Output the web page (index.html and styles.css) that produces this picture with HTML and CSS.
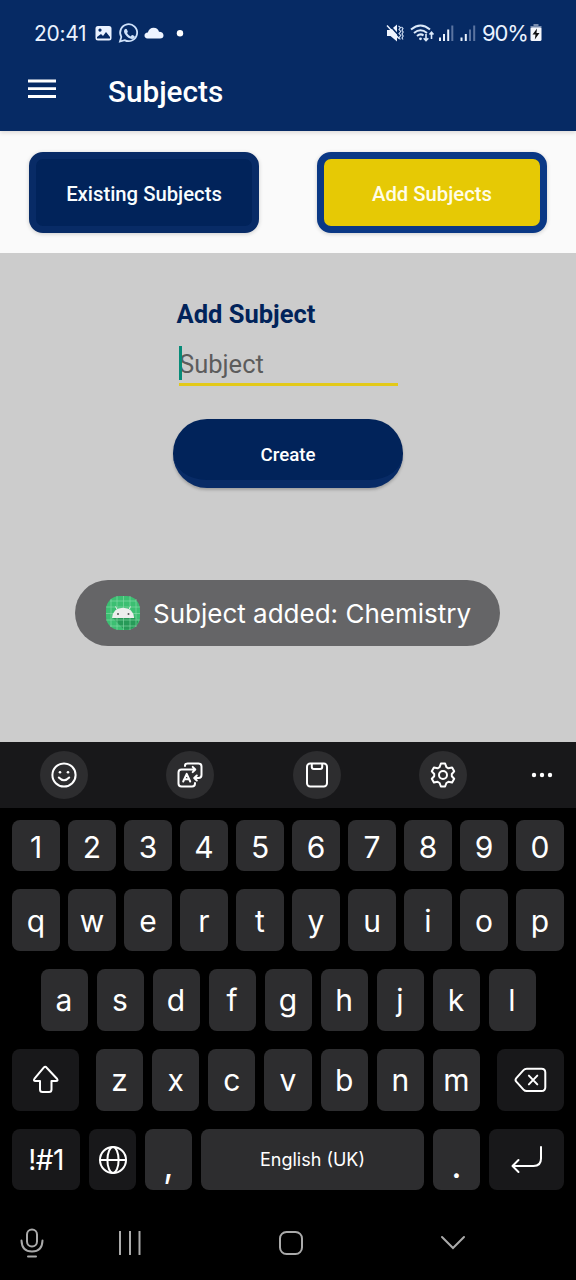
FILE: index.html
```html
<!DOCTYPE html>
<html lang="en">
<head>
<meta charset="utf-8">
<title>Subjects</title>
<link rel="stylesheet" href="styles.css">
</head>
<body>
<div class="screen">
  <header class="header">
    <div class="status">
      <div class="status-left">
        <span class="clock">20:41</span>
        <svg class="status-icons" width="90" height="24" viewBox="0 0 90 24">
          <path transform="translate(0 1.500)" fill="#eaf2ff" fill-rule="evenodd" d="M4 3.500h11q2.500 0 2.500 2.500v9.500q0 2.500-2.500 2.500h-11q-2.500 0-2.500-2.500v-9.500q0-2.500 2.500-2.500zM3 14.500v1.500h13v-1.500l-4-5-3 4-2-2zM6 6a1.600 1.600 0 1 0 .01 0z"/>
          <g transform="translate(.5 1)">
          <path fill="none" stroke="#cfe2fa" stroke-width="1.800" d="M25.500 19.500l1.300-4.600a8.500 8.500 0 1 1 3.300 3.200z"/>
          <path fill="#cfe2fa" d="M30.300 7.200q1.200-1 2 0l1 2.200q.2.600-.8 1.700 1.300 2.500 3.700 3.300l1.200-1.300q.4-.4 2.800 1.100.5 2.400-2.800 2.800-3.600-.3-6.800-4.700-2-3-.3-5.100z"/>
          </g>
          <path fill="#eef4ff" d="M53.500 17.500q-3-.3-3-3t3.300-3q1.400-4.800 5.800-4.800 4.200 0 5.400 4 4.500 0 4.500 3.800 0 3-3.500 3z"/>
          <circle cx="86" cy="12.300" r="3.200" fill="#fff"/>
        </svg>
      </div>
      <div class="status-right">
        <svg width="94" height="24" viewBox="0 0 94 24">
          <g fill="#f0f5ff">
            <path d="M2 9h3.500l6.500-5.500v17l-6.500-5.500h-3.500z"/>
            <path d="M13.500 5l2 1.500-1.500 2 1.800 2-1.800 2 1.800 2-1.800 2 1.300 2M16.500 6l1.500 1.500-1 1.700 1.200 1.800-1.200 2 1.200 2-1.200 2 1 1.500" fill="none" stroke="#d5e4f8" stroke-width="1.100"/>
          </g>
          <path d="M3.500 3l9 10" stroke="#062a64" stroke-width="1.600"/>
          <path d="M2 4.500l12 13" stroke="#f0f5ff" stroke-width="1.400"/>
          <g fill="none" stroke="#dceafa" stroke-width="2">
            <path d="M26 8.500q9.500-8 19 0M29 12q6.500-5.500 13 0M32 15q3.500-3 6.500-.5"/>
            <path stroke-width="1.600" d="M41 13v6.500m-2.300-2.200 2.300 2.400 2.300-2.400M46.500 18v-6.500m-2 2 2-2.200 2 2.200"/>
          </g>
          <circle cx="35.500" cy="17.800" r="1.400" fill="#dceafa"/>
          <g fill="#eaf2fc" transform="translate(-.500 -.500)">
            <rect x="54.500" y="17" width="2" height="3.500"/><rect x="58.500" y="13.500" width="2" height="7"/><rect x="62.700" y="9" width="2" height="11.500"/><rect x="66.800" y="5" width="2" height="15.500" fill="#5b74a0"/>
            <rect x="76" y="17" width="2" height="3.500"/><rect x="80.300" y="13.500" width="2" height="7"/><rect x="84.500" y="9" width="2" height="11.500" fill="#5b74a0"/><rect x="88.700" y="5" width="2" height="15.500" fill="#5b74a0"/>
          </g>
        </svg>
        <span class="percent">90%</span>
        <svg width="12" height="18" viewBox="0 0 12 18">
          <path fill="#788cae" d="M3.500 0h5v2h3v3h-11v-3h3z"/>
          <rect x=".500" y="3.500" width="11" height="13.500" rx="1.500" fill="#f5f7fb"/>
          <path fill="#111" d="M7 4.500l-4.500 6h3l-.7 5 4.700-6.500h-3z"/>
        </svg>
      </div>
    </div>
    <div class="titlebar">
      <svg class="menu" width="28" height="20" viewBox="0 0 28 20"><path stroke="#fff" stroke-width="2.800" d="M0 2h28M0 9.700h28M0 17.500h28"/></svg>
      <h1 class="title">Subjects</h1>
    </div>
  </header>

  <nav class="tabs">
    <button class="tab">Existing Subjects</button>
    <button class="tab tab-active">Add Subjects</button>
  </nav>

  <main class="content">
    <h2 class="form-title">Add Subject</h2>
    <div class="field"><span class="placeholder">Subject</span><i class="caret"></i></div>
    <button class="create">Create</button>
    <div class="toast">
      <svg width="36" height="36" viewBox="0 0 36 36">
        <rect x="1" y="1" width="34" height="34" rx="13.500" fill="#3cbf72"/>
        <path fill="#279a58" d="M7 22l12 12.800h3q9-1 11-7.800v-1l-5-5z"/>
        <path stroke="#8bdcab" stroke-width=".600" d="M6 4v28M12 1v34M18.500 1v34M25 1v34M31 4v28M5 6h26M1 12h34M1 18.500h34M1 25h34M5 31h26"/>
        <path fill="#eceeed" d="M7 23q.7-9.800 11-10.300 10.300.5 11.200 10.300z"/>
        <path stroke="#eceeed" d="M12.500 15l-2-3.500M23.500 15l2-3.500"/>
        <circle cx="13" cy="19" r="1" fill="#555"/><circle cx="23.500" cy="19" r="1" fill="#555"/>
      </svg>
      <span class="toast-text">Subject added: Chemistry</span>
    </div>
  </main>

  <section class="keyboard">
    <div class="tools">
      <span class="tool"><svg width="30" height="30" viewBox="0 0 30 30"><circle cx="15" cy="15" r="11.600"/><path d="M9.800 17.500q5.200 5.500 10.400 0"/><g class="solid"><circle cx="11" cy="12.200" r="1.300"/><circle cx="19" cy="12.200" r="1.300"/></g></svg></span>
      <span class="tool"><svg width="30" height="30" viewBox="0 0 30 30"><path d="M10 6v-.200q0-2.300 2.500-2.300h11q3 0 3 3v8.500q0 3-3 3h-4M21.800 15.500l-2.600 2.500 2.600 2.500M10 9.500h10m-2.300-2.600l2.600 2.600-2.600 2.600M14 9.500h-7.500q-3 0-3 3v11q0 3 3 3h10.500q3 0 3-3v-.500"/><path d="M8.200 21.500l3.500-7.700 3.500 7.700M9.500 19.200h4.400"/></svg></span>
      <span class="tool"><svg width="30" height="30" viewBox="0 0 30 30"><rect x="5" y="3.500" width="20" height="23" rx="3.200"/><path d="M9.800 4v3q0 2 2 2h6.400q2 0 2-2v-3"/></svg></span>
      <span class="tool"><svg width="30" height="30" viewBox="0 0 30 30"><circle cx="15" cy="15" r="4"/><path d="M12.900 3.500h4.200l1.300 3.700 2 1.100 3.700-.7 2.100 3.700-2.400 2.700v2.200l2.400 2.600-2.100 3.700-3.700-.7-2 1.200-1.300 3.500h-4.200l-1.300-3.500-2-1.200-3.700.7-2.100-3.700 2.400-2.600v-2.200l-2.400-2.700 2.100-3.700 3.700.7 2-1.100z"/></svg></span>
      <svg class="more" width="24" height="8" viewBox="0 0 24 8"><circle cx="4" cy="4" r="2.200"/><circle cx="12" cy="4" r="2.200"/><circle cx="20" cy="4" r="2.200"/></svg>
    </div>
    <div class="row digits"><span class="key">1</span><span class="key">2</span><span class="key">3</span><span class="key">4</span><span class="key">5</span><span class="key">6</span><span class="key">7</span><span class="key">8</span><span class="key">9</span><span class="key">0</span></div>
    <div class="row top"><span class="key">q</span><span class="key">w</span><span class="key">e</span><span class="key">r</span><span class="key">t</span><span class="key">y</span><span class="key">u</span><span class="key">i</span><span class="key">o</span><span class="key">p</span></div>
    <div class="row home"><span class="key">a</span><span class="key">s</span><span class="key">d</span><span class="key">f</span><span class="key">g</span><span class="key">h</span><span class="key">j</span><span class="key">k</span><span class="key">l</span></div>
    <div class="row lower">
      <span class="key dark"><svg width="30" height="30" viewBox="0 0 30 30"><path d="M13.200 2.700q1.500-1.700 3 0l10.300 11q1.500 2.300-1 2.300h-4.500v8.500q0 2.500-2.500 2.500h-6.500q-2.500 0-2.500-2.500v-8.500h-4.500q-2.500 0-1-2.300z" transform="translate(-.500 0)"/></svg></span>
      <span class="letters"><span class="key">z</span><span class="key">x</span><span class="key">c</span><span class="key">v</span><span class="key">b</span><span class="key">n</span><span class="key">m</span></span>
      <span class="key dark"><svg width="34" height="30" viewBox="0 0 34 30"><g transform="translate(-.700 0)"><path d="M13.500 3.700h14.700q3.800 0 3.800 3.800v14.800q0 3.800-3.800 3.800h-14.700q-2 0-3.300-1.500l-7.200-7.900q-1.500-1.800 0-3.600l7.200-7.900q1.300-1.500 3.300-1.500z"/><path d="M15.600 10.600l8.400 8.800M24 10.600l-8.400 8.800"/></g></svg></span>
    </div>
    <div class="row bottom">
      <span class="key dark symbols">!#1</span>
      <span class="key dark"><svg width="30" height="30" viewBox="0 0 30 30"><circle cx="15" cy="15" r="13"/><ellipse cx="15" cy="15" rx="5.600" ry="13"/><path d="M2 15h26"/></svg></span>
      <span class="key mark">,</span>
      <span class="key space">English (UK)</span>
      <span class="key mark dot">.</span>
      <span class="key dark"><svg width="34" height="30" viewBox="0 0 34 30"><path d="M31 2v11.500q0 7.500-7.500 7.500h-20.500M8.500 15l-6 6 6 6"/></svg></span>
    </div>
    <div class="navbar">
      <svg width="24" height="32" viewBox="0 0 24 32"><rect x="7" y="2.500" width="10" height="17" rx="5"/><path d="M1.500 13.500q.3 11 10.500 11t10.500-11M8 29.500h8"/></svg>
      <svg width="24" height="24" viewBox="0 0 24 24"><path d="M2 .500v23M12 .500v23M21.500 .500v23"/></svg>
      <svg width="26" height="26" viewBox="0 0 26 26"><rect x="2" y="2" width="22" height="22" rx="6.500"/></svg>
      <svg width="26" height="16" viewBox="0 0 26 16"><path d="M2 2l11 11 11-11"/></svg>
    </div>
  </section>
</div>
</body>
</html>
```
FILE: styles.css
```css
* { box-sizing: border-box; }
body { margin: 0; background: #000; font-family: Roboto, "Liberation Sans", sans-serif; }
button { font-family: inherit; padding: 0; }
svg { display: block; flex: none; }
.screen { width: 576px; height: 1280px; display: flex; flex-direction: column; overflow: hidden; }

.header { height: 131px; background: #062a64; color: #fff; flex: none; position: relative; z-index: 1; box-shadow: 0 2px 4px rgba(90, 70, 60, .16); }
.status { height: 48px; padding: 20px 34px 0 34px; display: flex; justify-content: space-between; align-items: flex-start; font-family: Inter, sans-serif; color: #eaf3ff; }
.status-left, .status-right { display: flex; align-items: center; height: 26px; }
.clock { width: 60px; font-size: 21px; letter-spacing: -.3px; }
.percent { width: 45px; margin-left: 3px; margin-right: 3px; font-size: 22px; letter-spacing: -1.1px; }
.titlebar { height: 83px; display: flex; align-items: center; padding: 0 28px 0; gap: 52px; }
.menu { margin-bottom: 2px; }
.title { margin: 3px 0 0; font-size: 29.700px; font-weight: 500; }

.tabs { height: 122px; flex: none; background: #fafafa; padding: 21px 29px 0; display: flex; justify-content: space-between; }
.tab { width: 230px; height: 81px; border: 7px solid #082b66; border-radius: 14px; background: #01235a; color: #f8fdff; font-size: 20.300px; font-weight: 500; padding-top: 2px; box-shadow: 0 1px 4px rgba(0, 0, 0, .18); }
.tab-active { border-color: #0a3885; background: #e6c905; color: #fffde8; }

.content { height: 489px; flex: none; background: #ccc; padding-top: 45px; display: flex; flex-direction: column; align-items: center; }
.form-title { width: 223px; height: 33px; margin: 0; line-height: 33px; font-size: 25.500px; font-weight: 700; color: #01235a; }
.field { position: relative; width: 219px; height: 55px; margin-left: 1px; border-bottom: 3px solid #e3c918; padding-top: 15px; font-size: 25.500px; line-height: 36px; color: #5c5c5c; }
.caret { position: absolute; left: 0; top: 15px; width: 3px; height: 34px; background: #078b78; }
.create { width: 230px; height: 69px; margin-top: 33px; border: 0 solid #082b66; border-bottom-width: 8px; border-radius: 34px; background: #01235a; color: #fff; font-size: 18.700px; font-weight: 500; padding-top: 10px; box-shadow: 0 2px 3px rgba(0, 0, 0, .22); }
.toast { width: 425px; height: 66px; margin-top: 92px; margin-right: 1px; border-radius: 33px; background: #656567; display: flex; align-items: center; padding-left: 30px; gap: 12px; color: #fff; }
.toast-text { font-family: Inter, sans-serif; font-size: 26px; white-space: nowrap; }

.keyboard { height: 538px; flex: none; background: #000; color: #fff; font-family: Inter, sans-serif; }
.tools { height: 66px; background: #18181a; display: flex; align-items: center; padding-left: 39.500px; gap: 78.500px; }
.tool { width: 48px; height: 48px; border-radius: 50%; background: #2d2d2f; display: flex; align-items: center; justify-content: center; flex: none; }
.tool svg, .key svg { fill: none; stroke: #fff; stroke-width: 2; stroke-linecap: round; stroke-linejoin: round; }
.tool .solid, .more { fill: #fff; stroke: none; }
.more { margin-left: -16px; }
.row { display: grid; padding: 0 12px; column-gap: 8px; height: 62px; }
.key { display: flex; align-items: center; justify-content: center; border-radius: 8px; background: #2d2d2f; font-size: 30px; line-height: 36px; }
.dark { background: #18181a; }
.digits { height: 51px; margin-top: 12px; grid-template-columns: repeat(10, 1fr); }
.digits .key, .top .key { padding-top: 2px; }
.top { margin-top: 18px; grid-template-columns: repeat(10, 1fr); }
.home { margin-top: 18px; padding: 0 40.500px; column-gap: 9px; grid-template-columns: repeat(9, 47px); }
.lower { margin-top: 18px; column-gap: 17px; grid-template-columns: 67px 1fr 67px; }
.letters { display: grid; grid-template-columns: repeat(7, 1fr); column-gap: 9px; }
.bottom { height: 61px; margin-top: 18px; column-gap: 9px; grid-template-columns: 68px 47px 47px 223px 47px 75px; }
.symbols { font-size: 28px; letter-spacing: -.5px; }
.mark { font-size: 36px; padding-top: 10px; }
.space { font-size: 18px; padding-top: 1px; }
.navbar { height: 90px; display: flex; align-items: center; padding: 16px 0 0 19.500px; }
.navbar svg { fill: none; stroke: #aaa; stroke-width: 2; stroke-linecap: round; }
.navbar svg:nth-child(2) { margin-left: 74px; }
.navbar svg:nth-child(3) { margin-left: 136px; }
.navbar svg:nth-child(4) { margin-left: 136px; }
```
